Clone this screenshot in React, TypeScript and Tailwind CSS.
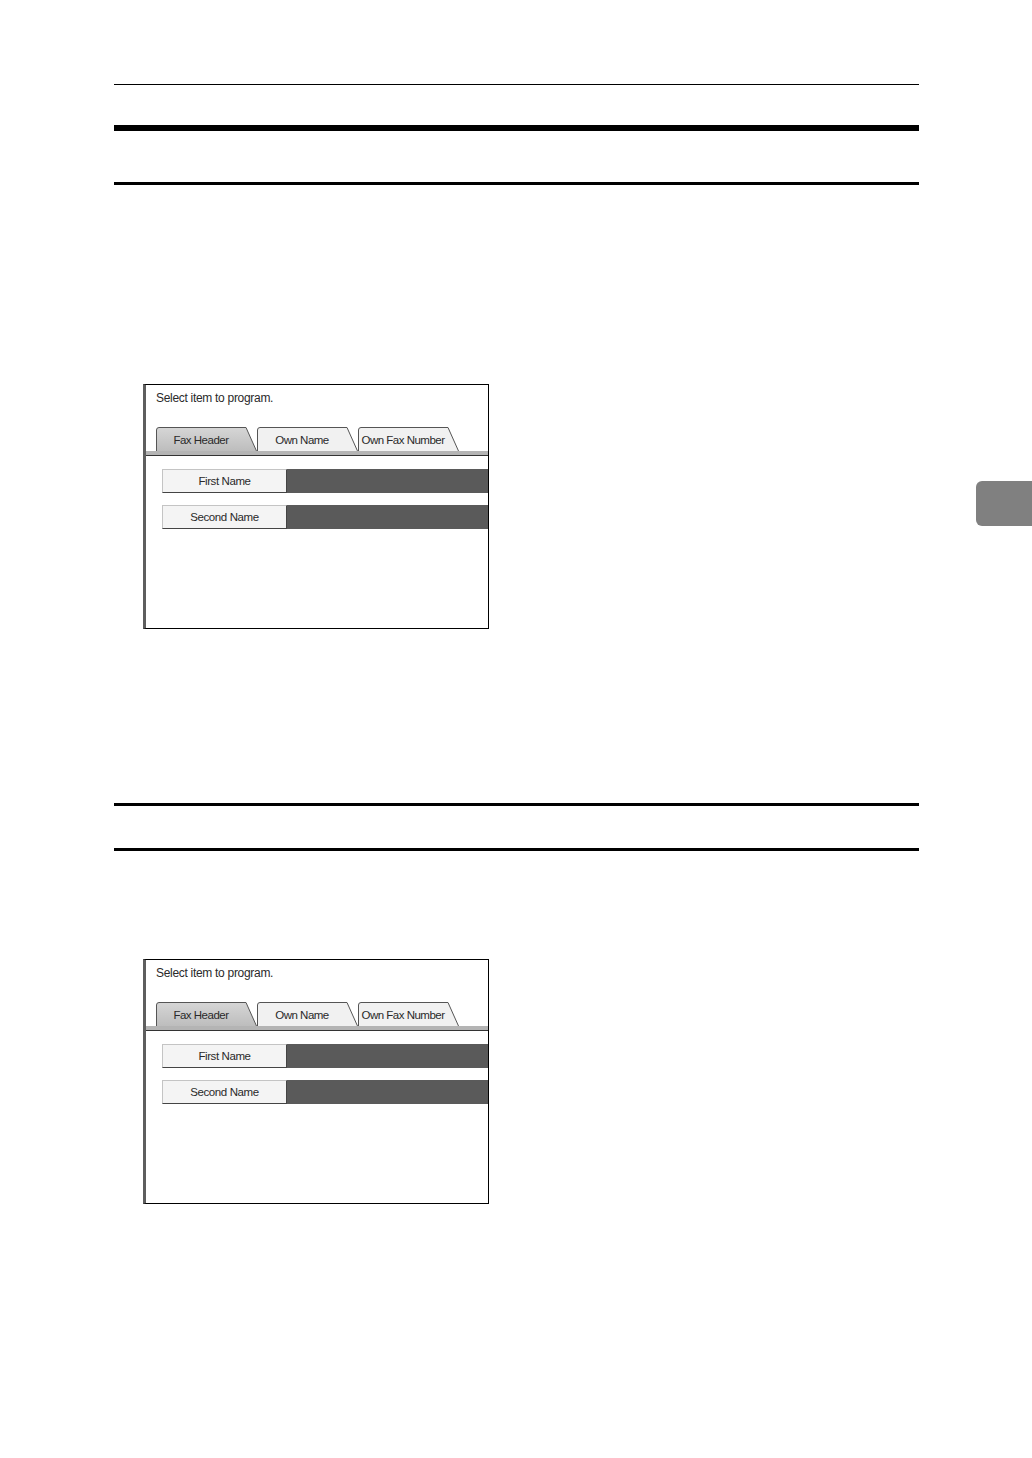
const font = { fontFamily: '"Liberation Sans", Arial, sans-serif' };

function Tab({ label, active }: { label: string; active?: boolean }) {
  return (
    <div className="relative w-[101px] h-[24px] flex items-center pr-[11px] justify-center">
      <svg className="absolute inset-0" width="101" height="24" viewBox="0 0 101 24">
        <defs>
          <linearGradient id="tabOn" x1="0" y1="0" x2="0" y2="1">
            <stop offset="0" stopColor="#d6d6d6" />
            <stop offset="1" stopColor="#bdbdbd" />
          </linearGradient>
        </defs>
        <path
          d="M0.5 24 V3 Q0.5 0.5 3 0.5 H90 L100.5 24"
          fill={active ? 'url(#tabOn)' : '#f1f1f1'}
          stroke="#555"
          strokeWidth="1"
        />
      </svg>
      <span className="relative text-[11.5px] leading-[14px] tracking-[-0.5px] text-[#2a2a2a] pt-[2px]">{label}</span>
    </div>
  );
}

function NameRow({ label }: { label: string }) {
  return (
    <div className="flex h-[24px] pl-[16px]">
      <div className="w-[125px] h-full flex items-center justify-center bg-[#f4f4f4] border border-t-[#c4c4c4] border-l-[#c4c4c4] border-b-[#444] border-r-[#444]">
        <span className="text-[11.5px] leading-[14px] tracking-[-0.4px] text-[#2a2a2a]">{label}</span>
      </div>
      <div className="flex-1 h-full bg-[#5a5a5a]" />
    </div>
  );
}

function ProgramPanel() {
  return (
    <div className="ml-[29px] w-[346px] h-[245px] bg-white border border-black border-l-[3px] border-l-[#5e5e5e] flex flex-col" style={font}>
      <div className="h-[42px] pt-[6px] pl-[10px]">
        <span className="block text-[12px] leading-[14px] tracking-[-0.3px] text-[#2a2a2a]">Select item to program.</span>
      </div>
      <div className="flex h-[24px] pl-[10px]">
        <Tab label="Fax Header" active />
        <Tab label="Own Name" />
        <Tab label="Own Fax Number" />
      </div>
      <div className="h-[4px] bg-[#b4b4b4]" />
      <div className="h-px bg-[#333]" />
      <div className="flex flex-col gap-[12px] pt-[13px]">
        <NameRow label="First Name" />
        <NameRow label="Second Name" />
      </div>
    </div>
  );
}

export default function App() {
  return (
    <div className="relative w-[1032px] h-[1458px] bg-white overflow-hidden">
      <div className="ml-[114px] w-[805px] pt-[84px] flex flex-col">
        <div className="h-px bg-black" />
        <div className="mt-[40px] h-[6px] bg-black" />
        <div className="mt-[51px] h-[3px] bg-black" />

        <div className="mt-[199px]">
          <ProgramPanel />
        </div>

        <div className="mt-[174px] h-[3px] bg-black" />
        <div className="mt-[42px] h-[3px] bg-black" />

        <div className="mt-[108px]">
          <ProgramPanel />
        </div>
      </div>

      {/* chapter thumb tab */}
      <div className="absolute left-[976px] top-[481px] w-[56px] h-[45px] rounded-l-[6px] bg-[#808080]" />
    </div>
  );
}
